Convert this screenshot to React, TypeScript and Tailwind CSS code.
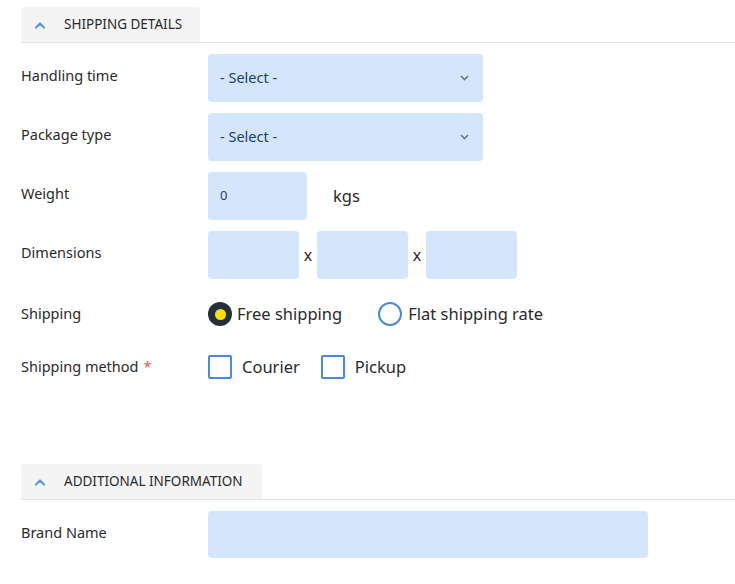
import React from "react";

function Chevron() {
  return (
    <svg width="12" height="8" viewBox="0 0 12 8">
      <path d="M2 6.5 L6 2.5 L10 6.5" fill="none" stroke="#5b9bd5" strokeWidth="2.2" strokeLinecap="round" strokeLinejoin="round" />
    </svg>
  );
}

function SectionHeader({ title, width }: { title: string; width: string }) {
  return (
    <div className="border-b border-[#e3e3e3] flex">
      <div className={`flex items-center h-[35px] bg-[#f4f4f4] rounded-t-[3px] pl-[13px] ${width}`}>
        <Chevron />
        <span className="ml-[18px] text-[13.5px] text-[#2a2a2a]">{title}</span>
      </div>
    </div>
  );
}

function Select() {
  return (
    <div className="w-[275px] h-[48px] bg-[#d4e6fb] rounded-[4px] flex items-center justify-between pl-[12px] pr-[14px]">
      <span className="text-[14.5px] text-[#1e3f6e]">- Select -</span>
      <svg width="9" height="6" viewBox="0 0 9 6">
        <path d="M1 1 L4.5 4.5 L8 1" fill="none" stroke="#6b7584" strokeWidth="1.6" />
      </svg>
    </div>
  );
}

function Row({ label, children }: { label: string; children: React.ReactNode }) {
  return (
    <div className="flex items-center h-[48px]">
      <div className="w-[187px] text-[14.5px] text-[#2a2a2a] -mt-[5px]">{label}</div>
      <div className="flex items-center">{children}</div>
    </div>
  );
}

export default function App() {
  return (
    <div className="w-[735px] h-[584px] bg-white pl-[21px] pt-[7px]" style={{ fontFamily: '"Noto Sans", "Open Sans", sans-serif' }}>
      <SectionHeader title="SHIPPING DETAILS" width="w-[179px]" />
      <div className="flex flex-col gap-[11px] mt-[11px]">
        <Row label="Handling time"><Select /></Row>
        <Row label="Package type"><Select /></Row>
        <Row label="Weight">
          <div className="w-[99px] h-[48px] bg-[#d4e6fb] rounded-[4px] flex items-center pl-[12px] text-[13px] text-[#1e3f6e]">0</div>
          <span className="ml-[26px] text-[16.5px] text-[#2a2a2a]">kgs</span>
        </Row>
        <Row label="Dimensions">
          <div className="w-[91px] h-[48px] bg-[#d4e6fb] rounded-[4px]" />
          <span className="w-[18px] text-center text-[16px] text-[#2a2a2a]">x</span>
          <div className="w-[91px] h-[48px] bg-[#d4e6fb] rounded-[4px]" />
          <span className="w-[18px] text-center text-[16px] text-[#2a2a2a]">x</span>
          <div className="w-[91px] h-[48px] bg-[#d4e6fb] rounded-[4px]" />
        </Row>
      </div>
      <div className="flex items-center h-[24px] mt-[23px]">
        <div className="w-[187px] text-[14.5px] text-[#2a2a2a] -mt-[1px]">Shipping</div>
        <div className="flex items-center">
          <div className="w-[24px] h-[24px] rounded-full bg-[#26303d] flex items-center justify-center">
            <div className="w-[11px] h-[11px] rounded-full bg-[#ffe000]" />
          </div>
          <span className="ml-[5px] text-[16.5px] text-[#2a2a2a]">Free shipping</span>
          <div className="ml-[36px] w-[24px] h-[24px] rounded-full border-2 border-[#4a8ad6]" />
          <span className="ml-[6px] text-[16.5px] text-[#2a2a2a]">Flat shipping rate</span>
        </div>
      </div>
      <div className="flex items-center h-[24px] mt-[29px]">
        <div className="w-[187px] text-[14.5px] text-[#2a2a2a] -mt-[1px]">
          Shipping method<span className="text-[#d9534f] ml-[5px]">*</span>
        </div>
        <div className="flex items-center">
          <div className="w-[24px] h-[24px] border-2 border-[#4a8ad6] rounded-[2px]" />
          <span className="ml-[10px] text-[16.5px] text-[#2a2a2a]">Courier</span>
          <div className="ml-[21px] w-[24px] h-[24px] border-2 border-[#4a8ad6] rounded-[2px]" />
          <span className="ml-[10px] text-[16.5px] text-[#2a2a2a]">Pickup</span>
        </div>
      </div>
      <div className="mt-[85px]">
        <SectionHeader title="ADDITIONAL INFORMATION" width="w-[241px]" />
      </div>
      <div className="flex items-center h-[47px] mt-[11px]">
        <div className="w-[187px] text-[14.5px] text-[#2a2a2a] -mt-[3px]">Brand Name</div>
        <div className="w-[440px] h-[47px] bg-[#d4e6fb] rounded-[4px]" />
      </div>
    </div>
  );
}
